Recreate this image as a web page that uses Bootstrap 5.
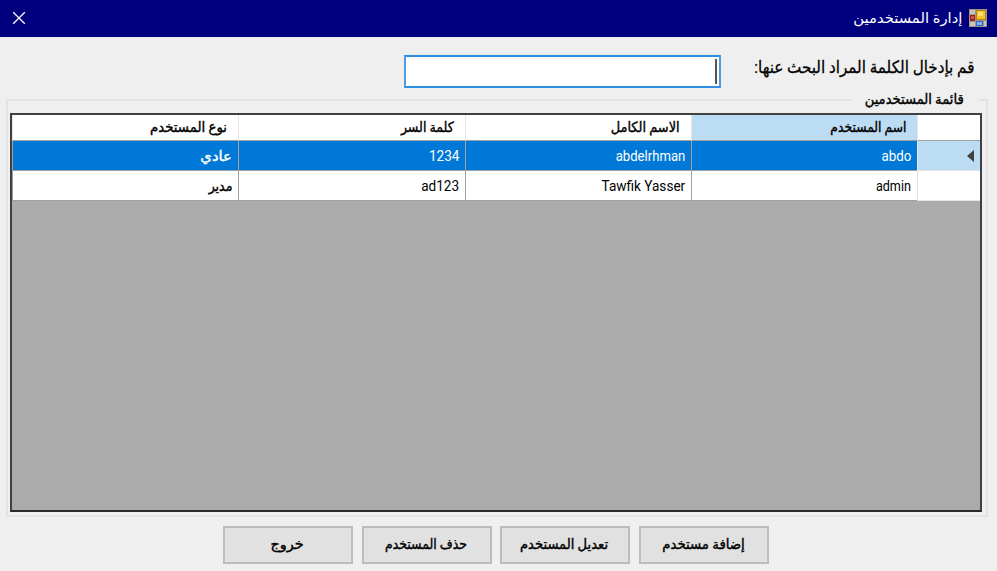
<!DOCTYPE html>
<html lang="ar" dir="rtl">
<head>
<meta charset="utf-8">
<title>إدارة المستخدمين</title>
<link rel="stylesheet" href="https://cdn.jsdelivr.net/npm/bootstrap@5.3.0/dist/css/bootstrap.min.css">
<style>
body{width:997px;height:571px;overflow:hidden;background:#efefef;color:#000;font:14px/20px Roboto,"DejaVu Sans",sans-serif}
.titlebar{height:37px;background:#00007f;color:#fff;padding:0 10px 2px 12px}
.app-title{margin-right:7px}
/* condensed or widened text runs, anchored to their right edge */
.fit{display:inline-block;white-space:nowrap;transform-origin:right center;transform:scaleX(var(--sx,1))}
.fx-88{--sx:.88}.fx-89{--sx:.893}.fx-90{--sx:.9}.fx-92{--sx:.924}.fx-94{--sx:.937}.fx-95{--sx:.95}.fx-97{--sx:.97}.fx-102{--sx:1.03}.fx-105{--sx:1.055}
.center-fit{transform-origin:center}
.ink{-webkit-text-stroke:.4px currentColor}
.search{height:57px;padding:18px 23px 0 0}
.search .fit{font-size:17px;-webkit-text-stroke:.3px}
.search-label{width:253px;line-height:24px}
.search-box{width:317px;height:33px;background:#fff;border:2px solid #4b9ce2;border-top-color:#2e8fe0;border-bottom-color:#2e8fe0;padding:2px 2px}
.caret{width:2px;height:25px;background:#555}
.group{margin:5px 9px 0 6px;width:982px;height:418px;border:2px solid #e3e3e3;padding:12px 4px 0 4px;position:relative}
.group-title{position:absolute;top:-12px;right:7px;width:127px;height:22px;background:#efefef;padding-right:15px}
.grid-box{width:972px;height:399px;border:2px solid #404040;border-bottom-color:#2a2a2a;background:#ababab}
.tbl{display:grid;grid-template-columns:63px 226px 226px 227px 226px;background:#fff}
.tbl>div{border-left:1px solid #a0a0a0;border-bottom:1px solid #a0a0a0;height:30px;line-height:31px;padding-right:6px}
.tbl>.h{height:26px;line-height:25px;padding-right:11px;border-left-color:#e5e5e5}
.tbl>.s{background:#0078d7;color:#fff}
.tbl>.r{background:#bcdcf4;border-color:#e5e5e5}
.tbl>.n{border-color:#e5e5e5}
.tbl>.h.n{border-bottom-color:#a0a0a0}
.tbl>.c{background:#bcdcf4}
.actions{padding:9px 228px 0 0;gap:8.7px}
.actions .btn{width:130px;height:38px;border:2px solid #bcbcbc;background:#e1e1e1;color:#000;font-size:14px;line-height:20px;padding:0 0 2px}
.actions .fit{position:relative;right:1px}
</style>
</head>
<body>
<header class="titlebar d-flex align-items-center">
<svg width="18" height="18" viewBox="0 0 18 18"><path fill="#9c9688" d="M0 0h18v18H0z"/><path fill="#c9c5ba" d="M1 1h5v4H1zM1 13h5v4H1z"/><path fill="#b5851f" d="M7 1h10v10H7z"/><path fill="#f5c02c" d="M8 2h8v8H8z"/><path fill="#ffe173" d="M9 3h5v4H9z"/><path fill="#97211c" d="M1 6h5v6H1z"/><path fill="#d94a3a" d="M2 7h3v3H2z"/><path fill="#3568c4" d="M7 12h7v5H7z"/><path fill="#7fb0f0" d="M8 13h5v3H8z"/><path fill="#c9c5ba" d="M15 12h2v5h-2z"/></svg>
<span class="fit fx-105 app-title">إدارة المستخدمين</span>
<svg class="me-auto" width="14" height="14" viewBox="0 0 14 14"><path d="M1.2 1.2l11.6 11.6M12.8 1.2L1.2 12.8" stroke="#fff" stroke-width="1.3"/></svg>
</header>
<div class="search d-flex"><label class="search-label"><span class="fit fx-89">قم بإدخال الكلمة المراد البحث عنها:</span></label><div class="search-box"><div class="caret"></div></div></div>
<section class="group"><div class="group-title"><span class="fit fx-94 ink">قائمة المستخدمين</span></div>
<div class="grid-box"><div class="tbl">
<div class="h n"></div><div class="h c"><span class="fit fx-88 ink">اسم المستخدم</span></div><div class="h"><span class="fit fx-92 ink">الاسم الكامل</span></div><div class="h"><span class="fit fx-90 ink">كلمة السر</span></div><div class="h"><span class="fit fx-95 ink">نوع المستخدم</span></div>
<div class="r d-flex align-items-center"><svg width="7" height="12" viewBox="0 0 7 12"><path d="M7 0v12L0 6z" fill="#404040"/></svg></div><div class="s"><span class="fit fx-95">abdo</span></div><div class="s"><span class="fit fx-94">abdelrhman</span></div><div class="s"><span class="fit fx-97">1234</span></div><div class="s"><span class="fit fx-105 ink">عادي</span></div>
<div class="n"></div><div><span class="fit fx-90">admin</span></div><div><span class="fit fx-97">Tawfik Yasser</span></div><div><span class="fit fx-97">ad123</span></div><div><span class="fit fx-90 ink">مدير</span></div>
</div></div></section>
<footer class="actions d-flex">
<button class="btn rounded-0"><span class="fit center-fit fx-95 ink">إضافة مستخدم</span></button>
<button class="btn rounded-0"><span class="fit center-fit fx-94 ink">تعديل المستخدم</span></button>
<button class="btn rounded-0"><span class="fit center-fit fx-89 ink">حذف المستخدم</span></button>
<button class="btn rounded-0"><span class="fit center-fit fx-102 ink">خروج</span></button>
</footer>
<script src="https://cdn.jsdelivr.net/npm/bootstrap@5.3.0/dist/js/bootstrap.bundle.min.js"></script>
</body>
</html>
